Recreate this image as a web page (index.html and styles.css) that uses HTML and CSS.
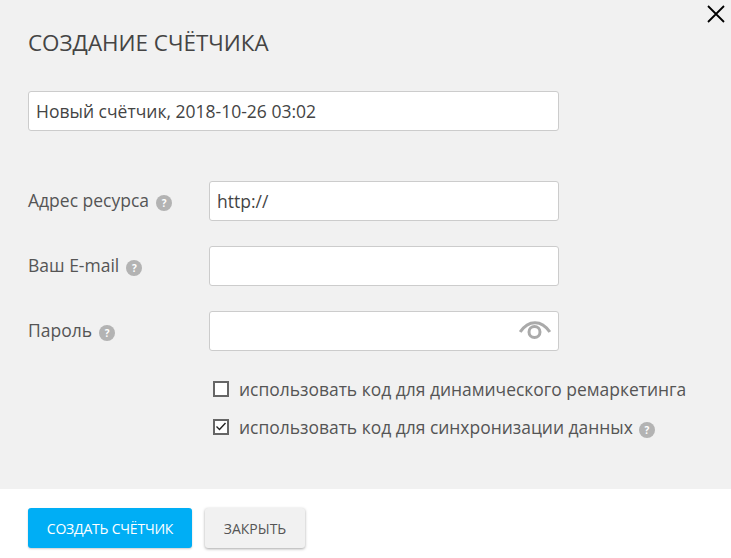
FILE: index.html
```html
<!DOCTYPE html>
<html lang="ru">
<head>
<meta charset="utf-8">
<title>Создание счётчика</title>
<link rel="stylesheet" href="styles.css">
</head>
<body>
<div class="dialog">
  <main class="content">
    <button class="close" aria-label="Закрыть">
      <svg width="18" height="18" viewBox="0 0 18 18"><path d="M1 1L17 17M17 1L1 17" stroke="#000" stroke-width="1.800" fill="none"/></svg>
    </button>
    <h1 class="title">СОЗДАНИЕ СЧЁТЧИКА</h1>
    <input class="field name" value="Новый счётчик, 2018-10-26 03:02">
    <div class="rows">
      <div class="row">
        <label class="label">Адрес ресурса <span class="help">?</span></label>
        <input class="field" value="http://">
      </div>
      <div class="row">
        <label class="label">Ваш E-mail <span class="help">?</span></label>
        <input class="field">
      </div>
      <div class="row">
        <label class="label">Пароль <span class="help">?</span></label>
        <div class="password">
          <input class="field">
          <svg class="eye" width="32" height="18" viewBox="0 0 32 18"><path d="M1.200 11C5.500 4.500 10 1.700 16 1.700S26.500 4.500 30.800 11" stroke="#aaa" stroke-width="3" fill="none"/><circle cx="15.500" cy="11" r="5.500" stroke="#aaa" stroke-width="3" fill="none"/></svg>
        </div>
      </div>
    </div>
    <div class="checks">
      <div class="check">
        <span class="box"></span>
        <span>использовать код для динамического ремаркетинга</span>
      </div>
      <div class="check">
        <span class="box"><svg width="12" height="12" viewBox="0 0 12 12"><path d="M1.500 5.500L4.500 8.500L10.500 2" stroke="#222" stroke-width="1.400" fill="none"/></svg></span>
        <span>использовать код для синхронизации данных</span>
        <span class="help">?</span>
      </div>
    </div>
  </main>
  <footer class="footer">
    <button class="btn primary">СОЗДАТЬ СЧЁТЧИК</button>
    <button class="btn secondary">ЗАКРЫТЬ</button>
  </footer>
</div>
</body>
</html>
```
FILE: styles.css
```css
* { box-sizing: border-box; }
html, body { margin: 0; padding: 0; }
body { width: 731px; height: 558px; background: #fff; font-family: "Open Sans", sans-serif; color: #444; overflow: hidden; }
.dialog { display: flex; flex-direction: column; height: 558px; }
.content { position: relative; height: 489px; background: #f1f1f1; padding: 28px 28px 0; }
.close { position: absolute; top: 5px; right: 6px; width: 18px; height: 18px; padding: 0; border: 0; background: none; display: block; }
.close svg { display: block; }
.title { margin: 0; font-size: 22.400px; line-height: 30px; font-weight: 400; color: #444; }
.field { display: block; width: 350px; height: 40px; padding: 0 7px; border: 1px solid #ccc; border-radius: 3px; background: #fff; font: 400 17.500px "Open Sans", sans-serif; color: #444; outline: none; }
.name { width: 531px; margin-top: 33px; }
.rows { margin-top: 50px; display: flex; flex-direction: column; gap: 25px; }
.row { display: flex; align-items: center; }
.label { width: 181px; padding-bottom: 2px; font-size: 17.500px; color: #555; display: flex; align-items: center; gap: 7px; }
.help { display: inline-flex; align-items: center; justify-content: center; width: 16px; height: 16px; margin-top: 5px; border-radius: 50%; background: #b3b3b3; color: #fff; font-size: 10px; font-weight: 700; }
.password { position: relative; width: 350px; }
.eye { position: absolute; right: 8px; top: 10px; }
.checks { margin: 27px 0 0 185px; display: flex; flex-direction: column; gap: 16px; }
.check { display: flex; align-items: center; font-size: 17.450px; line-height: 22px; color: #555; }
.box { width: 16px; height: 16px; border: 2px solid #666; background: #fff; margin-right: 10px; flex: none; display: flex; }
.box svg { display: block; }
.check .help { margin-left: 6px; }
.footer { flex: 1; background: #fff; padding: 19px 28px 0; display: flex; gap: 13px; align-items: flex-start; }
.btn { height: 40px; border: 0; border-radius: 3px; font: 400 14px "Open Sans", sans-serif; padding: 0; }
.primary { width: 164px; background: #00aef5; color: #fff; letter-spacing: -0.200px; box-shadow: 0 1px 2px rgba(0,0,0,.2); }
.secondary { width: 100px; background: #f1f1f1; color: #555; box-shadow: 0 1px 3px rgba(0,0,0,.35); }
```
